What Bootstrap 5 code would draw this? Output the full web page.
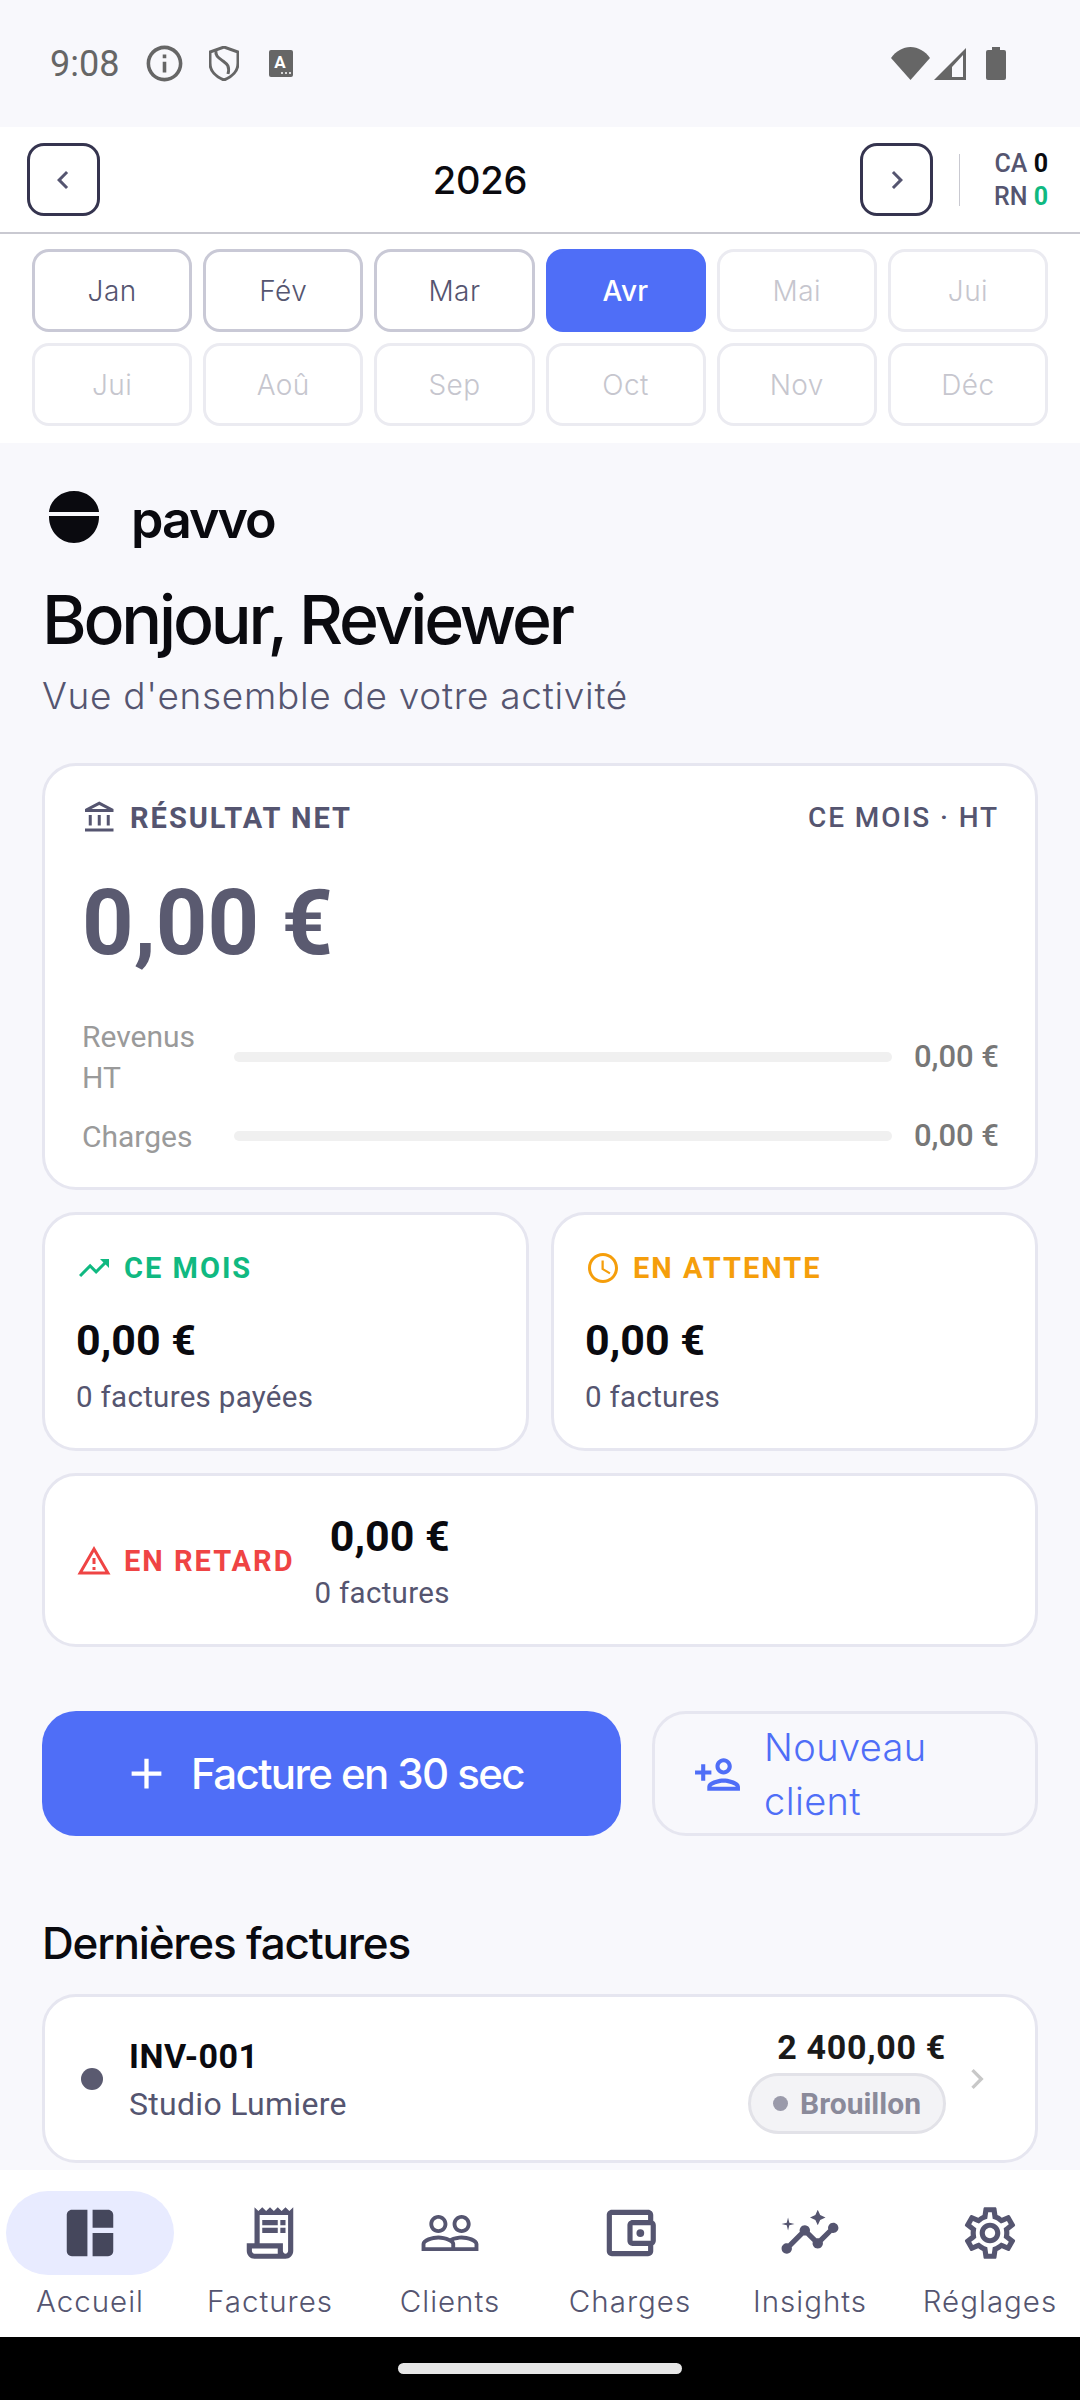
<!DOCTYPE html>
<html lang="fr">
<head>
    <meta charset="UTF-8">
    <meta name="viewport" content="width=device-width, initial-scale=1.0">
    <title>Pavvo</title>
    <link href="https://cdn.jsdelivr.net/npm/bootstrap@5.3.0/dist/css/bootstrap.min.css" rel="stylesheet">
    <style>
        html, body { margin: 0; background: #000; }
        body { font-family: Roboto, sans-serif; color: #0a0a0f; }
        svg { display: block; flex: none; fill: currentColor; }
        .app-shell { width: 1080px; height: 2400px; overflow: hidden; background: #f8f8fc; }
        .head-font { font-family: Inter, sans-serif; }

        .status-bar { height: 127px; color: #666; padding: 0 74px 0 50px; }
        .status-time { font-size: 36px; width: 93px; }
        .status-shield { margin-left: 23px; }
        .status-a { margin-left: 30px; }

        .year-bar { height: 107px; background: #fff; border-bottom: 2px solid #c9c9d1; padding: 0 32px 0 27px; }
        .year-btn { width: 73px; height: 73px; padding: 0; border: 3px solid #35344f; border-radius: 17px; color: #555570; background: #fff; }
        .year-label { font-size: 38px; font-weight: 500; width: 761px; text-align: center; letter-spacing: -.2px; padding-top: 2px; }
        .year-sep { width: 1px; height: 52px; background: #c9c9d1; margin: 0 32px 0 26px; }
        .year-stats { font-size: 25px; font-weight: 500; line-height: 33px; color: #555570; text-align: right; width: 56px; white-space: nowrap; }
        .year-stats b { font-weight: 700; color: #0a0a0f; }
        .year-stats b.up { color: #10b981; }

        .month-grid { display: grid; grid-template-columns: repeat(6, 1fr); gap: 11px; background: #fff; padding: 15px 32px 17px; }
        .month-btn { height: 83px; padding: 0; font-family: Inter, sans-serif; font-size: 28px; font-weight: 300; letter-spacing: .4px; border-radius: 17px; border: 3px solid #c9c9d6; color: #555570; background: #fff; }
        .month-btn.is-on { background: #4f6ef7; border-color: #4f6ef7; color: #fff; font-weight: 500; }
        .month-btn.is-off { border-color: #ebebf1; color: #c6c6ce; }

        .main-area { height: 1727px; overflow: hidden; padding: 48px 42px 0; }
        .logo-row { height: 52px; padding-left: 6px; }
        .logo-word { font-size: 52px; font-weight: 600; line-height: 52px; letter-spacing: -2px; margin-left: 31px; margin-top: 5px; }
        .hello { font-size: 68px; font-weight: 500; line-height: 80px; letter-spacing: -3.2px; margin: 36px 0 0; }
        .hello-sub { font-size: 37px; font-weight: 300; line-height: 50px; color: #555570; margin: 12px 0 42px; letter-spacing: .7px; }

        .pane { background: #fff; border: 3px solid #e6e6f0; border-radius: 34px; }
        .pane-main { padding: 34px 36px 26px 37px; height: 427px; }
        .cap-line { font-size: 29px; line-height: 36px; font-weight: 700; letter-spacing: 2px; gap: 12px; }
        .cap-muted { color: #555570; }
        .cap-light { font-size: 28px; font-weight: 500; letter-spacing: 1.9px; }
        .hero-amt { font-size: 90px; font-weight: 700; line-height: 100px; color: #5a5a70; margin: 38px 0 42px; }
        .bar-row { display: flex; align-items: center; gap: 22px; margin-bottom: 15px; }
        .bar-name { width: 130px; font-size: 30px; line-height: 41px; color: #9a9a9a; flex: none; }
        .bar-track { flex: 1; height: 10px; background: #f0f0f0; border-radius: 5px; }
        .bar-val { font-size: 31px; font-weight: 500; color: #777; white-space: nowrap; }

        .duo { display: grid; grid-template-columns: 1fr 1fr; gap: 22px; margin: 22px 0; }
        .pane-small { height: 239px; padding: 35px 20px 0 31px; }
        .amt { font-size: 43px; font-weight: 700; line-height: 50px; color: #0a0a0f; }
        .duo .amt { margin-top: 29px; }
        .amt-note { font-size: 29.5px; line-height: 36px; color: #555570; letter-spacing: .3px; margin-top: 14px; }
        .c-green { color: #10b981; }
        .c-amber { color: #f59e0b; }
        .c-red { color: #ef4444; }
        .pane-late { height: 174px; padding-left: 31px; padding-top: 2px; gap: 20px; }

        .action-row { display: grid; grid-template-columns: 579px 1fr; gap: 31px; margin-top: 64px; }
        .btn-bill { height: 125px; background: #4f6ef7; border: 0; border-radius: 34px; color: #fff; font-family: Inter, sans-serif; font-size: 42px; font-weight: 500; letter-spacing: -1.6px; padding: 0 18px 0 0; gap: 19px; }
        .btn-client { height: 125px; background: transparent; border: 3px solid #e6e6f0; border-radius: 34px; color: #4f6ef7; font-family: Inter, sans-serif; font-size: 38px; font-weight: 300; line-height: 54px; letter-spacing: .4px; padding: 1px 0 0 38px; gap: 22px; text-align: left; }
        .btn-client span { width: 200px; }

        .section-title { font-size: 44px; font-weight: 500; line-height: 56px; letter-spacing: -1.2px; margin: 79px 0 23px; }
        .pane-inv { height: 169px; padding: 0 38px 0 36px; }
        .inv-dot { width: 22px; height: 22px; border-radius: 50%; background: #5a5a70; margin-right: 26px; }
        .inv-no { font-size: 34px; font-weight: 700; line-height: 40px; letter-spacing: .5px; margin-top: 3px; }
        .inv-who { font-size: 32px; line-height: 40px; color: #555570; letter-spacing: .3px; margin-top: 8px; }
        .inv-amt { font-size: 34px; font-weight: 700; line-height: 40px; color: #1a1a1a; letter-spacing: .7px; margin-top: 3px; }
        .state-pill { height: 61px; margin-top: 6px; padding: 0 22px 0 22px; gap: 12px; border: 3px solid #e2e2e8; border-radius: 31px; background: #f3f3f6; color: #8a8a9a; font-size: 30px; font-weight: 700; }
        .state-pill i { width: 15px; height: 15px; border-radius: 50%; background: #9a9aaa; display: block; }
        .inv-chev { color: #c8c8c8; margin-left: 11px; }

        .tab-bar { height: 167px; background: #fff; padding-top: 21px; }
        .tab-item { width: 180px; color: #555570; text-decoration: none; font-family: Inter, sans-serif; font-size: 29.5px; font-weight: 300; letter-spacing: 1px; }
        .tab-icon { width: 168px; height: 84px; border-radius: 42px; }
        .tab-item.is-on .tab-icon { background: #e8ebff; color: #45475c; }
        .tab-text { line-height: 36px; margin-top: 8px; white-space: nowrap; }

        .gesture-bar { height: 63px; background: #000; padding-top: 26px; }
        .gesture-bar span { display: block; width: 284px; height: 11px; border-radius: 6px; background: #e6e6e6; margin: 0 auto; }
    </style>
</head>
<body>
<div class="app-shell">
    <div class="status-bar d-flex align-items-center">
        <div class="status-time">9:08</div>
        <svg width="43" height="43" viewBox="0 0 24 24"><path d="M11 7h2v2h-2zm0 4h2v6h-2zm1-9C6.48 2 2 6.48 2 12s4.48 10 10 10 10-4.48 10-10S17.52 2 12 2zm0 18c-4.41 0-8-3.59-8-8s3.59-8 8-8 8 3.59 8 8-3.59 8-8 8z"/></svg>
        <svg class="status-shield" width="30" height="35" viewBox="0 0 30 35"><path d="M15 1 1 6v11c0 8 6 14 14 17 8-3 14-9 14-17V6z" fill="none" stroke="currentColor" stroke-width="3"/><path d="M7 5c-1 5 3 7 7 10s7 5 5 13" fill="none" stroke="currentColor" stroke-width="3"/></svg>
        <svg class="status-a" width="24" height="27" viewBox="0 0 24 27"><rect width="24" height="27" rx="2"/><text x="11" y="18" font-family="Roboto, sans-serif" font-size="17" font-weight="700" fill="#fff" text-anchor="middle">A</text><circle cx="13" cy="23" r="1" fill="#fff"/><circle cx="17" cy="23" r="1" fill="#fff"/><circle cx="21" cy="23" r="1" fill="#fff"/></svg>
        <div class="ms-auto d-flex align-items-end gap-1">
            <svg width="39" height="33" viewBox="0 0 39 33"><path d="M0 11C5 4 12 0 19.5 0S34 4 39 11L19.500 33z"/></svg>
            <svg width="32" height="32" viewBox="0 0 32 32"><path d="M32 0v32H0zM29 7 18 19v10h11z" fill-rule="evenodd"/></svg>
            <svg class="ms-3" width="20" height="33" viewBox="0 0 20 33"><path d="M6 0h8v3h4a2 2 0 0 1 2 2v26a2 2 0 0 1-2 2H2a2 2 0 0 1-2-2V5a2 2 0 0 1 2-2h4z"/></svg>
        </div>
    </div>

    <div class="year-bar d-flex align-items-center">
        <button class="btn year-btn d-flex align-items-center justify-content-center" type="button">
            <svg width="36" height="36" viewBox="0 0 24 24"><path d="M15.41 7.410 14 6l-6 6 6 6 1.41-1.410L10.830 12z"/></svg>
        </button>
        <div class="year-label head-font">2026</div>
        <button class="btn year-btn d-flex align-items-center justify-content-center" type="button">
            <svg width="36" height="36" viewBox="0 0 24 24"><path d="M10 6 8.590 7.410 13.170 12l-4.580 4.590L10 18l6-6z"/></svg>
        </button>
        <div class="year-sep"></div>
        <div class="year-stats">CA <b>0</b><br>RN <b class="up">0</b></div>
    </div>

    <div class="month-grid">
        <button class="btn month-btn" type="button">Jan</button>
        <button class="btn month-btn" type="button">Fév</button>
        <button class="btn month-btn" type="button">Mar</button>
        <button class="btn month-btn is-on" type="button">Avr</button>
        <button class="btn month-btn is-off" type="button">Mai</button>
        <button class="btn month-btn is-off" type="button">Jui</button>
        <button class="btn month-btn is-off" type="button">Jui</button>
        <button class="btn month-btn is-off" type="button">Aoû</button>
        <button class="btn month-btn is-off" type="button">Sep</button>
        <button class="btn month-btn is-off" type="button">Oct</button>
        <button class="btn month-btn is-off" type="button">Nov</button>
        <button class="btn month-btn is-off" type="button">Déc</button>
    </div>

    <div class="main-area">
        <div class="logo-row d-flex align-items-center">
            <svg width="52" height="52" viewBox="0 0 52 52"><path d="M1 21C2 9 13 0 26 0s24 9 25 21zM1 25h50v1c0 14-11 26-25 26S1 40 1 26z"/></svg>
            <div class="logo-word head-font">pavvo</div>
        </div>
        <h1 class="hello head-font">Bonjour, Reviewer</h1>
        <p class="hello-sub head-font">Vue d'ensemble de votre activité</p>

        <div class="pane pane-main">
            <div class="d-flex justify-content-between align-items-center cap-line cap-muted">
                <div class="d-flex align-items-center cap-line">
                    <svg width="36" height="36" viewBox="0 0 24 24"><path d="M6.500 10h-2v7h2v-7zm6 0h-2v7h2v-7zm8.500 9H2v2h19v-2zm-2.500-9h-2v7h2v-7zm-7-6.740L16.710 6H6.290l5.210-2.740m0-2.260L2 6v2h19V6l-9.500-5z"/></svg>
                    <span>RÉSULTAT NET</span>
                </div>
                <span class="cap-light">CE MOIS · HT</span>
            </div>
            <div class="hero-amt">0,00 €</div>
            <div class="bar-row">
                <div class="bar-name">Revenus HT</div>
                <div class="bar-track"></div>
                <div class="bar-val">0,00 €</div>
            </div>
            <div class="bar-row">
                <div class="bar-name">Charges</div>
                <div class="bar-track"></div>
                <div class="bar-val">0,00 €</div>
            </div>
        </div>

        <div class="duo">
            <div class="pane pane-small">
                <div class="d-flex align-items-center cap-line c-green">
                    <svg width="36" height="36" viewBox="0 0 24 24"><path d="M16 6l2.290 2.290-4.880 4.880-4-4L2 16.590 3.410 18l6-6 4 4 6.300-6.290L22 12V6z"/></svg>
                    <span>CE MOIS</span>
                </div>
                <div class="amt">0,00 €</div>
                <div class="amt-note">0 factures payées</div>
            </div>
            <div class="pane pane-small">
                <div class="d-flex align-items-center cap-line c-amber">
                    <svg width="36" height="36" viewBox="0 0 24 24"><path d="M11.990 2C6.470 2 2 6.480 2 12s4.470 10 9.990 10C17.520 22 22 17.520 22 12S17.520 2 11.990 2zM12 20c-4.420 0-8-3.580-8-8s3.580-8 8-8 8 3.580 8 8-3.580 8-8 8zm.5-13H11v6l5.250 3.150.75-1.230-4.500-2.670z"/></svg>
                    <span>EN ATTENTE</span>
                </div>
                <div class="amt">0,00 €</div>
                <div class="amt-note">0 factures</div>
            </div>
        </div>

        <div class="pane pane-late d-flex align-items-center">
            <div class="d-flex align-items-center cap-line c-red">
                <svg width="36" height="36" viewBox="0 0 24 24"><path d="M12 5.990 19.530 19H4.470L12 5.990M12 2 1 21h22L12 2zm1 14h-2v2h2v-2zm0-6h-2v4h2v-4z"/></svg>
                <span>EN RETARD</span>
            </div>
            <div class="text-end">
                <div class="amt">0,00 €</div>
                <div class="amt-note">0 factures</div>
            </div>
        </div>

        <div class="action-row">
            <button class="btn btn-bill d-flex align-items-center justify-content-center" type="button">
                <svg width="51" height="51" viewBox="0 0 24 24"><path d="M19 13h-6v6h-2v-6H5v-2h6V5h2v6h6v2z"/></svg>
                <span>Facture en 30 sec</span>
            </button>
            <button class="btn btn-client d-flex align-items-center" type="button">
                <svg width="49" height="49" viewBox="0 0 24 24"><path d="M15 12c2.210 0 4-1.790 4-4s-1.790-4-4-4-4 1.790-4 4 1.790 4 4 4zm0-6c1.100 0 2 .9 2 2s-.9 2-2 2-2-.9-2-2 .9-2 2-2zm0 8c-2.670 0-8 1.340-8 4v2h16v-2c0-2.660-5.330-4-8-4zm-6 4c.22-.72 3.310-2 6-2 2.700 0 5.800 1.290 6 2H9zm-3-3v-3h3v-2H6V7H4v3H1v2h3v3h2z"/></svg>
                <span>Nouveau client</span>
            </button>
        </div>

        <h2 class="section-title head-font">Dernières factures</h2>
        <div class="pane pane-inv d-flex align-items-center">
            <div class="inv-dot"></div>
            <div class="flex-grow-1">
                <div class="inv-no">INV-001</div>
                <div class="inv-who">Studio Lumiere</div>
            </div>
            <div class="d-flex flex-column align-items-end">
                <div class="inv-amt">2 400,00 €</div>
                <div class="state-pill d-flex align-items-center"><i></i><span>Brouillon</span></div>
            </div>
            <svg class="inv-chev" width="40" height="40" viewBox="0 0 24 24"><path d="M10 6 8.590 7.410 13.170 12l-4.580 4.590L10 18l6-6z"/></svg>
        </div>
    </div>

    <nav class="tab-bar d-flex">
        <a class="tab-item is-on d-flex flex-column align-items-center" href="#">
            <div class="tab-icon d-flex align-items-center justify-content-center"><svg width="62" height="62" viewBox="0 0 24 24"><path d="M11 21H5c-1.100 0-2-.9-2-2V5c0-1.100.9-2 2-2h6v18zm2 0h6c1.100 0 2-.9 2-2v-7h-8v9zm8-11V5c0-1.100-.9-2-2-2h-6v7h8z"/></svg></div>
            <div class="tab-text">Accueil</div>
        </a>
        <a class="tab-item d-flex flex-column align-items-center" href="#">
            <div class="tab-icon d-flex align-items-center justify-content-center"><svg width="62" height="62" viewBox="0 0 24 24"><path d="M19.500 3.500 18 2l-1.500 1.500L15 2l-1.500 1.500L12 2l-1.500 1.500L9 2 7.500 3.500 6 2v14H3v3c0 1.660 1.340 3 3 3h12c1.660 0 3-1.340 3-3V2l-1.500 1.500zM15 20H6c-.55 0-1-.45-1-1v-1h10v2zm4-1c0 .55-.45 1-1 1s-1-.45-1-1v-3H8V5h11v14z"/><path d="M9 7h6v2H9zm7 0h2v2h-2zm-7 3h6v2H9zm7 0h2v2h-2z"/></svg></div>
            <div class="tab-text">Factures</div>
        </a>
        <a class="tab-item d-flex flex-column align-items-center" href="#">
            <div class="tab-icon d-flex align-items-center justify-content-center"><svg width="62" height="62" viewBox="0 0 24 24"><path d="M16.500 13c-1.200 0-3.070.34-4.500 1-1.430-.67-3.300-1-4.500-1C5.330 13 1 14.080 1 16.250V19h22v-2.750c0-2.170-4.330-3.250-6.500-3.250zm-4 4.500h-10v-1.250c0-.54 2.560-1.750 5-1.750s5 1.210 5 1.750v1.250zm9 0H14v-1.250c0-.46-.2-.86-.52-1.220.88-.3 1.960-.53 3.020-.53 2.440 0 5 1.210 5 1.750v1.250zM7.500 12c1.930 0 3.500-1.570 3.500-3.500S9.430 5 7.500 5 4 6.570 4 8.500 5.570 12 7.500 12zm0-5.500c1.100 0 2 .9 2 2s-.9 2-2 2-2-.9-2-2 .9-2 2-2zm9 5.500c1.930 0 3.500-1.570 3.500-3.500S18.430 5 16.500 5 13 6.570 13 8.500s1.570 3.500 3.500 3.500zm0-5.500c1.100 0 2 .9 2 2s-.9 2-2 2-2-.9-2-2 .9-2 2-2z"/></svg></div>
            <div class="tab-text">Clients</div>
        </a>
        <a class="tab-item d-flex flex-column align-items-center" href="#">
            <div class="tab-icon d-flex align-items-center justify-content-center"><svg width="62" height="62" viewBox="0 0 24 24"><path d="M21 7.280V5c0-1.100-.9-2-2-2H5c-1.110 0-2 .9-2 2v14c0 1.100.89 2 2 2h14c1.100 0 2-.9 2-2v-2.280c.59-.35 1-.98 1-1.720V9c0-.74-.41-1.380-1-1.720zM20 9v6h-7V9h7zM5 19V5h14v2h-6c-1.100 0-2 .9-2 2v6c0 1.100.9 2 2 2h6v2H5z"/><circle cx="16" cy="12" r="1.500"/></svg></div>
            <div class="tab-text">Charges</div>
        </a>
        <a class="tab-item d-flex flex-column align-items-center" href="#">
            <div class="tab-icon d-flex align-items-center justify-content-center"><svg width="62" height="62" viewBox="0 0 24 24"><path d="M21 8c-1.450 0-2.260 1.440-1.930 2.510l-3.550 3.560c-.3-.09-.74-.09-1.040 0l-2.550-2.550C12.270 10.450 11.460 9 10 9c-1.450 0-2.270 1.440-1.930 2.520l-4.560 4.550C2.440 15.740 1 16.550 1 18c0 1.100.9 2 2 2 1.450 0 2.260-1.440 1.930-2.510l4.550-4.560c.3.09.74.09 1.040 0l2.550 2.550C12.730 16.550 13.540 18 15 18c1.450 0 2.270-1.440 1.930-2.520l3.560-3.550c1.070.33 2.510-.48 2.510-1.930 0-1.100-.9-2-2-2z"/><path d="M15 9l.94-2.070L18 6l-2.060-.93L15 3l-.92 2.070L12 6l2.080.93L15 9zM3.500 11 4 9l2-.5L4 8l-.5-2L3 8l-2 .5L3 9z"/></svg></div>
            <div class="tab-text">Insights</div>
        </a>
        <a class="tab-item d-flex flex-column align-items-center" href="#">
            <div class="tab-icon d-flex align-items-center justify-content-center"><svg width="62" height="62" viewBox="0 0 24 24"><path d="M19.430 12.980c.04-.32.07-.64.07-.98 0-.34-.03-.66-.07-.98l2.110-1.650c.19-.15.24-.42.12-.64l-2-3.460c-.09-.16-.26-.25-.44-.25-.06 0-.12.01-.17.03l-2.490 1c-.52-.4-1.080-.73-1.690-.98l-.38-2.650C14.460 2.180 14.250 2 14 2h-4c-.25 0-.46.18-.49.42l-.38 2.650c-.61.25-1.170.59-1.690.98l-2.490-1c-.06-.02-.12-.03-.18-.03-.17 0-.34.09-.43.25l-2 3.460c-.13.22-.07.49.12.64l2.110 1.650c-.04.32-.07.65-.07.98 0 .33.03.66.07.98l-2.110 1.650c-.19.15-.24.42-.12.64l2 3.460c.09.16.26.25.44.25.06 0 .12-.01.17-.03l2.490-1c.52.4 1.080.73 1.690.98l.38 2.650c.03.24.24.42.49.42h4c.25 0 .46-.18.49-.42l.38-2.650c.61-.25 1.170-.59 1.690-.98l2.490 1c.06.02.12.03.18.03.17 0 .34-.09.43-.25l2-3.460c.12-.22.07-.49-.12-.64l-2.110-1.650zm-1.980-1.710c.04.31.05.52.05.73 0 .21-.02.43-.05.73l-.14 1.130.89.7 1.080.84-.7 1.210-1.270-.51-1.040-.42-.9.68c-.43.32-.84.56-1.250.73l-1.060.43-.16 1.130-.2 1.350h-1.400l-.19-1.350-.16-1.130-1.060-.43c-.43-.18-.83-.41-1.230-.71l-.91-.7-1.060.43-1.270.51-.7-1.210 1.080-.84.89-.7-.14-1.130c-.03-.31-.05-.54-.05-.74s.02-.43.05-.73l.14-1.130-.89-.7-1.080-.84.7-1.210 1.270.51 1.040.42.9-.68c.43-.32.84-.56 1.250-.73l1.060-.43.16-1.130.2-1.350h1.390l.19 1.350.16 1.130 1.060.43c.43.18.83.41 1.230.71l.91.7 1.060-.43 1.270-.51.7 1.210-1.070.85-.89.7.14 1.130zM12 8c-2.210 0-4 1.790-4 4s1.790 4 4 4 4-1.790 4-4-1.790-4-4-4zm0 6c-1.100 0-2-.9-2-2s.9-2 2-2 2 .9 2 2-.9 2-2 2z"/></svg></div>
            <div class="tab-text">Réglages</div>
        </a>
    </nav>
    <div class="gesture-bar"><span></span></div>
</div>
<script src="https://cdn.jsdelivr.net/npm/bootstrap@5.3.0/dist/js/bootstrap.bundle.min.js"></script>
</body>
</html>
